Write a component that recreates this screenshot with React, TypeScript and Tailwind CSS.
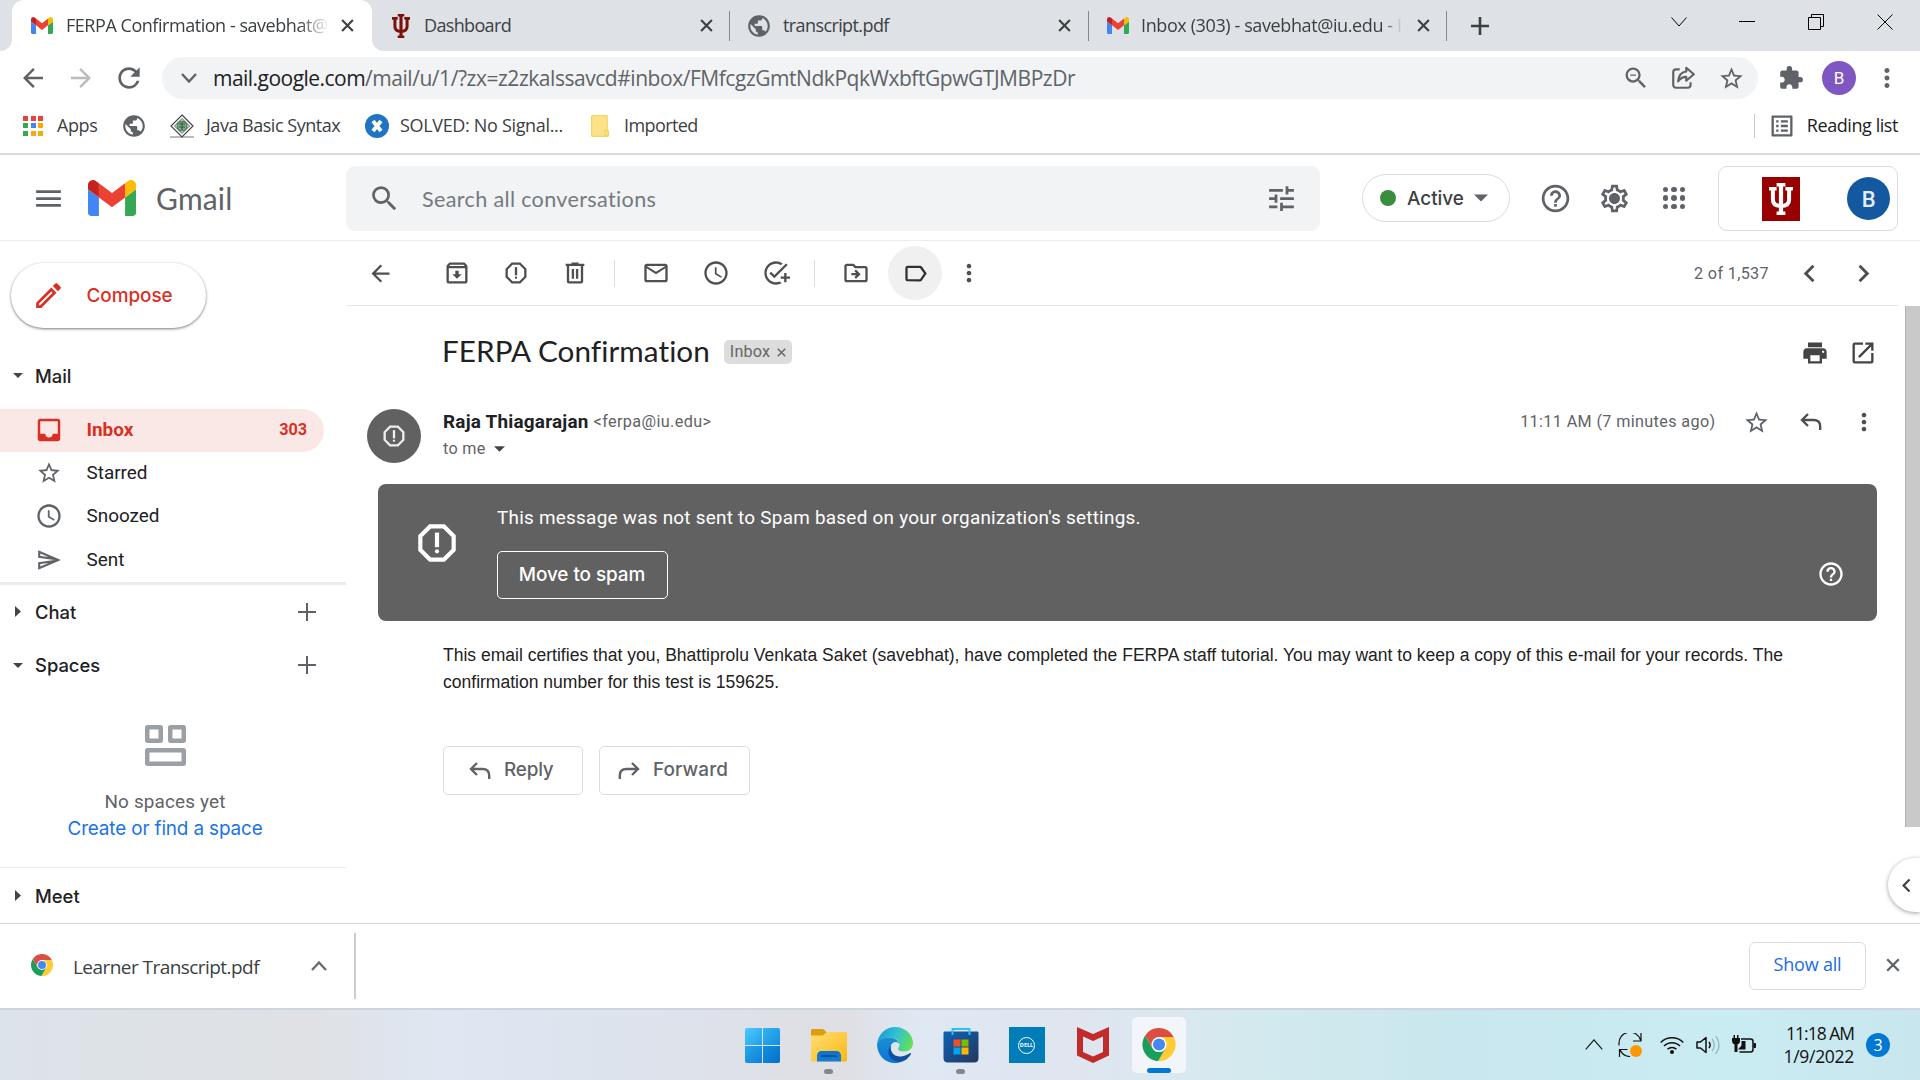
import React from "react";
import {
  MdArrowBack, MdArrowForward, MdRefresh, MdZoomOut, MdStarBorder, MdExtension, MdMoreVert, MdPublic,
  MdMenu, MdSearch, MdTune, MdHelpOutline, MdOutlineSettings, MdOutlineEdit, MdInbox, MdAccessTime,
  MdOutlineSend, MdOutlineArchive, MdOutlineReport, MdMailOutline, MdOutlineAddTask, MdOutlineDriveFileMove,
  MdLabelOutline, MdChevronLeft, MdChevronRight, MdPrint, MdOpenInNew, MdOutlineListAlt,
} from "react-icons/md";

const UI = "font-['Open_Sans',sans-serif]";
const RB = "font-['Roboto',sans-serif]";
const IN = "font-['Inter',sans-serif]";
const LT = "font-['Lato',sans-serif]";

type P = { className?: string };

/* A box whose content sits in its middle */
function Cell({ className = "", children }: P & { children?: React.ReactNode }) {
  return <span className={`flex shrink-0 items-center justify-center ${className}`}>{children}</span>;
}

function GmailLogo({ className }: P) {
  return (
    <svg viewBox="52 42 88 66" className={className} preserveAspectRatio="none">
      <path fill="#4285f4" d="M58 108h14V74L52 59v43c0 3.32 2.69 6 6 6" />
      <path fill="#34a853" d="M120 108h14c3.32 0 6-2.69 6-6V59l-20 15" />
      <path fill="#fbbc04" d="M120 48v26l20-15v-8c0-7.42-8.47-11.65-14.4-7.2" />
      <path fill="#ea4335" d="M72 74V48l24 18 24-18v26L96 92" />
      <path fill="#c5221f" d="M52 51v8l20 15V48l-5.6-4.2c-5.94-4.45-14.4-.22-14.4 7.2" />
    </svg>
  );
}

function Trident({ className }: P) {
  return (
    <svg viewBox="0 0 24 32" className={className} fill="none" stroke="currentColor">
      <path strokeWidth="4.2" d="M12 1v30" />
      <path strokeWidth="3.4" d="M7.6 1.7h8.8M7.6 30.3h8.8M0 5.8h7.6M16.4 5.8H24" />
      <path strokeWidth="4" d="M3.9 5v11.5c0 4.6 2.6 6.5 8.1 6.5s8.1-1.9 8.1-6.5V5" />
    </svg>
  );
}

function Chrome({ className }: P) {
  return (
    <svg viewBox="2 2 44 44" className={className}>
      <path fill="#fc3" d="M24 14H43.6A22 22 0 0 1 22.86 45.97L32.66 29z" />
      <path fill="#1a9f5b" d="M32.66 29L22.86 45.97A22 22 0 0 1 5.54 12.03L15.34 29z" />
      <path fill="#dc4e41" d="M15.34 29L5.54 12.03A22 22 0 0 1 43.6 14H24z" />
      <circle cx="24" cy="24" r="10" fill="#fff" />
      <circle cx="24" cy="24" r="8" fill="#4688f1" />
    </svg>
  );
}

function Close({ className }: P) {
  return (
    <svg viewBox="0 0 14 14" className={className} stroke="currentColor" strokeWidth="2.3">
      <path d="M1.2 1.2l11.6 11.6M12.8 1.2L1.2 12.8" />
    </svg>
  );
}

function Chevron({ className, d }: P & { d: string }) {
  return (
    <svg viewBox="0 0 16 10" className={className} fill="none" stroke="currentColor">
      <path d={d} />
    </svg>
  );
}

function Reply({ className }: P) {
  return (
    <svg viewBox="0 0 22 18" className={className} fill="none" stroke="currentColor" strokeWidth="2.4">
      <path d="M8 1L2 7l6 6M2 7h11.5c4.200 0 6.700 2.500 6.700 6.500V17" />
    </svg>
  );
}

function Trash({ className }: P) {
  return (
    <svg viewBox="0 0 24 24" className={className} fill="none" stroke="currentColor" strokeWidth="2">
      <path d="M4 5h16M9 4h6M6 5v14.2c0 .5.300.800.800.800h10.400c.5 0 .800-.300.800-.800V5M10.200 8.500v8.500M13.800 8.500v8.500" />
    </svg>
  );
}

function Plus({ className }: P) {
  return (
    <svg viewBox="0 0 18 18" className={className} stroke="currentColor" strokeWidth="2">
      <path d="M9 0v18M0 9h18" />
    </svg>
  );
}

function Down({ className }: P) {
  return (
    <svg viewBox="0 0 10 5" className={className} fill="currentColor">
      <path d="M0 0h10L5 5z" />
    </svg>
  );
}

function Right({ className }: P) {
  return (
    <svg viewBox="0 0 6 11" className={className} fill="currentColor">
      <path d="M0 0v11l6-5.500z" />
    </svg>
  );
}

function TabStrip() {
  return (
    <div className={`flex h-[51px] shrink-0 items-center bg-[#dee1e6] text-[18px] text-[#3c4043] ${UI}`}>
      <span className="h-full w-3 bg-white">
        <span className="block h-full w-full rounded-br-[12px] bg-[#dee1e6]" />
      </span>
      <div className="flex h-full w-[360px] items-center rounded-t-[12px] bg-white pl-[19px]">
        <GmailLogo className="h-[17px] w-[22px]" />
        <span className="ml-[13px] w-[264px] overflow-hidden whitespace-nowrap tracking-[-0.46px] [mask-image:linear-gradient(to_right,black_88%,transparent)]">
          FERPA Confirmation - savebhat@
        </span>
        <Close className="ml-[11px] size-[13px]" />
      </div>
      <span className="h-full w-3 bg-white">
        <span className="block h-full w-full rounded-bl-[12px] bg-[#dee1e6]" />
      </span>
      <Trident className="ml-[7px] h-6 w-5 text-[#7d110c]" />
      <span className="ml-[13px] w-[276px] tracking-[-0.65px]">Dashboard</span>
      <Close className="size-[13px]" />
      <span className="ml-[16px] h-[30px] w-px bg-[#85888d]" />
      <MdPublic className="ml-[16px] size-[26px] text-[#5f6368]" />
      <span className="ml-[11px] w-[275px] tracking-[-0.6px]">transcript.pdf</span>
      <Close className="size-[13px]" />
      <span className="ml-[17px] h-[30px] w-px bg-[#85888d]" />
      <GmailLogo className="ml-[18px] h-[17px] w-[22px]" />
      <span className="ml-[12px] w-[262px] overflow-hidden whitespace-nowrap tracking-[-0.39px] [mask-image:linear-gradient(to_right,black_92%,transparent)]">
        Inbox (303) - savebhat@iu.edu - I
      </span>
      <Close className="ml-[14px] size-[13px]" />
      <span className="ml-[16px] h-[30px] w-px bg-[#85888d]" />
      <svg viewBox="0 0 18 18" className="ml-[24px] size-[18px]" stroke="#3c4043" strokeWidth="2.600"><path d="M9 0v18M0 9h18" /></svg>
      <div className="mb-2 ml-auto flex items-center text-black">
        <Chevron className="h-[10px] w-4" d="M.5 .5L8 9L15.500 .5" />
        <span className="ml-[52px] h-px w-[16px] bg-black" />
        <svg viewBox="0 0 16 16" className="ml-[53px] size-4" fill="none" stroke="currentColor"><path d="M.5 3.500h12v12H.5zM3.500 3.500v-3h12v12h-3" /></svg>
        <svg viewBox="0 0 16 16" className="mr-[27px] ml-[53px] size-4" fill="none" stroke="currentColor"><path d="M.5.5l15 15M15.500.5l-15 15" /></svg>
      </div>
    </div>
  );
}

function AddressBar() {
  return (
    <div className="flex h-[54px] shrink-0 items-center bg-white text-[#5f6368]">
      <MdArrowBack className="ml-[18px] size-[30px]" />
      <MdArrowForward className="ml-[18px] size-[30px] text-[#babcbe]" />
      <MdRefresh className="ml-[17px] size-[32px]" />
      <div className={`ml-[17px] flex h-[42px] w-[1596px] items-center rounded-full bg-[#f1f3f4] ${UI}`}>
        <Chevron className="ml-[19px] h-[10px] w-4 stroke-[2.400]" d="M1 1L8 8.500L15 1" />
        <span className="ml-[16px] pt-[2px] text-[21px] whitespace-nowrap text-[#5f6368]">
          <span className="tracking-[-0.53px] text-[#202124]">mail.google.com</span>
          <span className="tracking-[-0.46px]">/mail/u/1/?zx=z2zkalssavcd#inbox/FMfcgzGmtNdkPqkWxbftGpwGTJMBPzDr</span>
        </span>
        <MdZoomOut className="ml-auto size-[28px]" />
        <svg viewBox="0 0 24 24" className="ml-[20px] size-[26px]" fill="none" stroke="currentColor" strokeWidth="2" strokeLinejoin="round">
          <path d="M9 4H5.500A2.500 2.500 0 0 0 3 6.500v12A2.500 2.500 0 0 0 5.500 21h11a2.500 2.500 0 0 0 2.500-2.500V16" />
          <path d="M15 2.500L22 8.500L15 14.500V11c-3.500 0-5.500 1.200-7.500 4c.5-5 3-8.500 7.500-9z" />
        </svg>
        <MdStarBorder className="mr-[13px] ml-[22px] size-[27px]" />
      </div>
      <MdExtension className="ml-[20px] size-[26px]" />
      <Cell className={`ml-[18px] size-[34px] rounded-full bg-[#7e57c2] pt-px text-[17px] text-white ${RB}`}>B</Cell>
      <MdMoreVert className="ml-[16px] size-[30px]" />
    </div>
  );
}

const APP_DOTS = ["bg-[#ea4335]", "bg-[#ea4335]", "bg-[#ea4335]", "bg-[#34a853]", "bg-[#4285f4]", "bg-[#f9ab00]", "bg-[#34a853]", "bg-[#f9ab00]", "bg-[#f9ab00]"];

function Bookmarks() {
  return (
    <div className={`flex h-[50px] shrink-0 items-center border-b-2 border-[#dadada] bg-white pb-[7px] text-[18px] whitespace-nowrap text-[#3c4043] ${UI}`}>
      <div className="ml-[23px] grid grid-cols-3 gap-[2.500px]">
        {APP_DOTS.map((c, i) => <span key={i} className={`size-[5px] ${c}`} />)}
      </div>
      <span className="ml-[14px] w-[64px] tracking-[-0.4px]">Apps</span>
      <MdPublic className="size-[26px] text-[#5f6368]" />
      <svg viewBox="0 0 24 24" className="ml-[23px] size-6" fill="none">
        <path d="M0 23h24" stroke="#bbb" strokeWidth="2" />
        <path d="M12 1l11 11-11 11L1 12z" fill="#fff" stroke="#444" strokeWidth="1.200" />
        <path d="M12 4.500l7.500 7.500-7.500 7.500L4.500 12z" stroke="#555" />
        <circle cx="12" cy="12" r="5" fill="#7fa98b" stroke="#2f6b42" />
        <path d="M9 10h6M9 13h6M12 8v8" stroke="#36543f" />
      </svg>
      <span className="ml-3 w-[159px] tracking-[-0.48px]">Java Basic Syntax</span>
      <svg viewBox="0 0 24 24" className="size-6">
        <circle cx="12" cy="12" r="12" fill="#1f74c4" />
        <path d="M8 7l8 10M16 7l-8 10" stroke="#fff" strokeWidth="3.800" />
      </svg>
      <span className="ml-[11px] w-[191px] tracking-[-0.33px]">SOLVED: No Signal...</span>
      <svg viewBox="0 0 18 22" className="h-[22px] w-[18px]" stroke="#f0cf4b" fill="#fde28a">
        <path d="M.7.7h15.500v15l1 1v4.600H.7z" />
        <path d="M14 21v-5.500h3.200V21z" />
      </svg>
      <span className="ml-[15px] tracking-[-0.6px]">Imported</span>
      <span className="ml-auto h-6 w-px bg-[#c6c8cb]" />
      <MdOutlineListAlt className="ml-[13px] size-[28px] text-[#5f6368]" />
      <span className="mr-[22px] ml-[11px] tracking-[-0.43px] text-[#202124]">Reading list</span>
    </div>
  );
}

function Header() {
  return (
    <div className="flex h-[86px] shrink-0 items-center border-b border-[#ececec] bg-white pt-px text-[#5f6368]">
      <MdMenu className="ml-[32px] size-[33px]" />
      <GmailLogo className="ml-[23px] h-9 w-[48px]" />
      <span className={`ml-[20px] w-[190px] text-[30px] tracking-[0.2px] ${LT}`}>Gmail</span>
      <div className="flex h-[65px] w-[974px] items-center rounded-[9px] bg-[#f1f3f4]">
        <MdSearch className="ml-[22px] size-[33px]" />
        <span className={`mt-[2px] ml-[21px] text-[21.600px] tracking-[0.33px] text-[#757a7f] ${LT}`}>Search all conversations</span>
        <MdTune className="mr-[22px] ml-auto size-[33px]" />
      </div>
      <div className="ml-[42px] flex h-[48px] w-[148px] items-center rounded-full border border-[#dadce0]">
        <span className="ml-[17px] size-4 rounded-full bg-[#388e3c]" />
        <span className={`ml-[11px] pt-[2px] text-[18.900px] font-medium text-[#3c4043] ${IN}`}>Active</span>
        <Down className="ml-[10px] h-[8px] w-[14px]" />
      </div>
      <MdHelpOutline className="ml-[29px] size-[33px]" />
      <span className="relative ml-[26px] flex size-[33px] items-center justify-center">
        <MdOutlineSettings className="size-[33px]" />
        <span className="absolute size-[8px] rounded-full bg-[#5f6368]" />
      </span>
      <div className="ml-[32px] grid grid-cols-3 gap-[3px]">
        {APP_DOTS.map((_, i) => <span key={i} className="size-[5.400px] rounded-full bg-[#5f6368]" />)}
      </div>
      <div className="ml-[33px] flex h-[65px] w-[180px] items-center rounded-[9px] border border-[#dadce0]">
        <Cell className="ml-[43px] mt-px h-[44px] w-[38px] bg-[#900]"><Trident className="h-8 w-6 text-white" /></Cell>
        <Cell className={`mt-px ml-[47px] size-[43px] rounded-full bg-[#14599f] pt-[2px] text-[22px] font-medium text-[#e4edf6] ${RB}`}>B</Cell>
      </div>
    </div>
  );
}

function NavRow({ icon, label, children, className = "" }: P & { icon: React.ReactNode; label: string; children?: React.ReactNode }) {
  return (
    <div className={`flex h-[43px] items-center rounded-r-full text-[18.900px] ${RB} ${className}`}>
      <Cell className="ml-[33px] w-[31px]">{icon}</Cell>
      <span className="ml-[22.500px]">{label}</span>
      {children}
    </div>
  );
}

function Section({ open, label, plus, className = "" }: P & { open?: boolean; label: string; plus?: boolean }) {
  return (
    <div className={`flex items-center text-[#202124] ${className}`}>
      <Cell className="ml-[12px] w-[11px] text-[#444]">{open ? <Down className="h-[5px] w-[10px]" /> : <Right className="h-[11px] w-[6px]" />}</Cell>
      <span className={`ml-[12px] pt-[2px] text-[18.400px] font-medium ${IN}`}>{label}</span>
      {plus && <Plus className="mr-[30.500px] ml-auto size-[18px] text-[#5f6368]" />}
    </div>
  );
}

function Sidebar() {
  return (
    <div className="flex w-[346px] shrink-0 flex-col bg-white text-[#202124]">
      <div className="mt-[22px] ml-[11px] flex h-[65px] w-[195px] shrink-0 items-center rounded-full bg-white text-[#d93025] shadow-[0_1px_3px_rgba(60,64,67,0.5),0_1px_2px_rgba(60,64,67,0.25)]">
        <MdOutlineEdit className="ml-[21px] size-[33px]" />
        <span className={`ml-[21.500px] pt-[2px] text-[18.900px] font-medium tracking-[-0.03px] ${IN}`}>Compose</span>
      </div>
      <Section open label="Mail" className="mt-[28px] h-10" />
      <NavRow className="mt-[13px] w-[324px] bg-[#fae8e6] font-bold text-[#d93025]" icon={<MdInbox className="size-[30px]" />} label="Inbox">
        <span className="mr-[17px] ml-auto text-[16.200px]">303</span>
      </NavRow>
      <NavRow icon={<MdStarBorder className="size-[26px] text-[#5f6368]" />} label="Starred" />
      <NavRow icon={<MdAccessTime className="size-[28px] text-[#5f6368]" />} label="Snoozed" />
      <NavRow className="mt-px" icon={<MdOutlineSend className="size-[26px] text-[#5f6368]" />} label="Sent" />
      <div className="mt-px h-[3px] shrink-0 bg-[#ececec]" />
      <Section label="Chat" plus className="h-[53px]" />
      <Section open label="Spaces" plus className="h-[54px]" />
      <div className="mt-[33px] flex w-[330px] flex-col items-center">
        <svg viewBox="0 0 41 41" className="size-[41px]" fill="none" stroke="#9aa0a6" strokeWidth="4.500">
          <rect x="2.250" y="2.250" width="13.500" height="13.500" rx=".5" />
          <rect x="25.250" y="2.250" width="13.500" height="13.500" rx=".5" />
          <rect x="2.250" y="25.250" width="36.500" height="13.500" rx=".5" />
        </svg>
        <span className={`mt-[22px] text-[18.900px] leading-[27px] tracking-[0.16px] text-[#5f6368] ${RB}`}>No spaces yet</span>
        <span className={`text-[18.900px] leading-[27px] tracking-[-0.14px] text-[#1a73e8] ${IN}`}>Create or find a space</span>
      </div>
      <div className="mt-[25px] h-px shrink-0 bg-[#ececec]" />
      <Section label="Meet" className="h-[55px]" />
    </div>
  );
}

function Toolbar() {
  return (
    <div className="mr-[22px] flex h-[65px] shrink-0 items-center border-b border-[#e8e8e8] text-[#4f4f4f]">
      <MdArrowBack className="ml-[21px] size-[27px]" />
      <MdOutlineArchive className="ml-[48.500px] size-[28px]" />
      <MdOutlineReport className="ml-[31px] size-[28px]" />
      <Trash className="ml-[31px] size-[28px]" />
      <span className="ml-[25px] h-[27px] w-px bg-[#dedede]" />
      <MdMailOutline className="ml-[27px] size-[28px]" />
      <MdAccessTime className="ml-[32px] size-[28px]" />
      <MdOutlineAddTask className="ml-[32px] size-[28px]" />
      <span className="ml-[24px] h-[27px] w-px bg-[#dedede]" />
      <MdOutlineDriveFileMove className="ml-[27px] size-[28px]" />
      <Cell className="ml-[18.500px] size-[54px] rounded-full bg-[#f0f0f0] text-[#303030]"><MdLabelOutline className="size-[27px]" /></Cell>
      <MdMoreVert className="ml-[12.500px] size-[28px]" />
      <span className={`ml-auto pt-[2px] text-[16.200px] tracking-[0.342px] text-[#5f6368] ${RB}`}>2 of 1,537</span>
      <MdChevronLeft className="ml-[23px] size-[35px]" />
      <MdChevronRight className="mr-[17px] ml-[19px] size-[35px]" />
    </div>
  );
}

function Message() {
  return (
    <div className={`flex flex-1 flex-col ${RB}`}>
      <div className="mt-[28px] flex h-[36px] items-center text-[#444]">
        <span className={`ml-[96px] pb-px text-[29.700px] tracking-[0.06px] text-[#202124] ${LT}`}>FERPA Confirmation</span>
        <div className="ml-[14px] flex h-6 items-center rounded-[5px] bg-[#ddd] pr-[6px] pl-[6px] text-[16.200px] tracking-[0.19px] text-[#666]">
          Inbox
          <Close className="ml-[7px] size-[9px]" />
        </div>
        <MdPrint className="mt-px ml-auto size-[28px]" />
        <MdOpenInNew className="mt-px mr-[28px] ml-[20px] size-[28px]" />
      </div>
      <div className="mt-[39px] flex h-[54px]">
        <Cell className="ml-[21px] size-[54px] rounded-full bg-[#616161] text-[#eee]"><MdOutlineReport className="size-[28px]" /></Cell>
        <div className="ml-[22px] flex-1 text-[16.200px] text-[#5f6368]">
          <div className="flex h-[26px] items-center">
            <span className="text-[18.900px] font-bold tracking-[0.22px] text-[#202124]">Raja Thiagarajan</span>
            <span className="ml-[5px] tracking-[0.38px]">&lt;ferpa@iu.edu&gt;</span>
            <span className="ml-auto tracking-[0.36px]">11:11 AM (7 minutes ago)</span>
            <MdStarBorder className="ml-[27px] size-[27px]" />
            <Reply className="ml-[30px] h-[18px] w-[22px] text-[#4f4f4f]" />
            <MdMoreVert className="mr-[27.500px] ml-[28px] size-[28px] text-[#4f4f4f]" />
          </div>
          <div className="flex h-[28px] items-center">
            <span className="tracking-[0.27px]">to me</span>
            <Down className="ml-[8px] h-[6px] w-[11px] text-[#444]" />
          </div>
        </div>
      </div>
      <div className="mt-[21px] ml-[32px] flex h-[137px] w-[1499px] rounded-[8px] bg-[#616161] text-white">
        <MdOutlineReport className="mt-[34px] ml-[34px] size-[50px]" />
        <div className="ml-[35px] flex flex-1 flex-col items-start">
          <span className="mt-[20px] text-[18.900px] leading-[27px] tracking-[0.257px]">This message was not sent to Spam based on your organization's settings.</span>
          <span className={`mt-[20px] flex h-[48px] w-[171px] items-center justify-center rounded-[5px] border border-white pr-px text-[18.900px] font-medium tracking-[-0.05px] ${IN}`}>Move to spam</span>
        </div>
        <MdHelpOutline className="mt-[76px] mr-[32px] size-[28px]" />
      </div>
      <p className="mt-[21px] ml-[97px] w-[1400px] font-['Liberation_Sans',sans-serif] text-[17.550px] leading-[27px] text-[#222]">
        This email certifies that you, Bhattiprolu Venkata Saket (savebhat), have completed the FERPA staff tutorial. You may want to keep a copy of this e-mail for your records. The
        <br />
        confirmation number for this test is 159625.
      </p>
      <div className={`mt-[50px] ml-[97px] flex gap-[16px] text-[18.900px] font-medium text-[#5f6368] ${IN}`}>
        <div className="flex h-[49px] w-[140px] items-center rounded-[5px] border border-[#dadce0]">
          <Reply className="ml-[25px] h-[18px] w-[22px]" />
          <span className="ml-[13px] tracking-[-0.2px]">Reply</span>
        </div>
        <div className="flex h-[49px] w-[151px] items-center rounded-[5px] border border-[#dadce0]">
          <Reply className="ml-[18px] h-[18px] w-[22px] -scale-x-100" />
          <span className="ml-[13px] tracking-[0.1px]">Forward</span>
        </div>
      </div>
    </div>
  );
}

function Downloads() {
  return (
    <div className={`flex h-[85px] shrink-0 items-center border-t border-[#d5d7da] bg-white text-[#3c4043] ${UI}`}>
      <Chrome className="mb-[2px] ml-[31px] size-[22px]" />
      <span className="ml-[20px] w-[238px] pt-[2px] text-[19px] tracking-[-0.55px]">Learner Transcript.pdf</span>
      <Chevron className="mb-px h-[10px] w-4 stroke-[2.400] text-[#6a6d72]" d="M1 9L8 1.500L15 9" />
      <span className="ml-[27px] h-[66px] w-[2px] bg-[#ccc]" />
      <Cell className="mr-[20px] mb-px ml-auto h-[48px] w-[117px] rounded-[6px] border border-[#dadce0] pb-[3px] text-[18px] font-medium tracking-[-0.2px] text-[#1a6be8]">Show all</Cell>
      <Close className="mr-[20px] mb-[2px] size-[14px] text-[#5f6368]" />
    </div>
  );
}

function Edge() {
  return (
    <svg viewBox="0 0 36 36" className="size-9">
      <defs>
        <linearGradient id="cap" x1="0" y1=".3" x2="1" y2=".6"><stop offset="0" stopColor="#1d9ad8" /><stop offset=".5" stopColor="#31c2d3" /><stop offset="1" stopColor="#66e052" /></linearGradient>
        <linearGradient id="body" x1="0" y1="0" x2="0" y2="1"><stop offset="0" stopColor="#1b8fd0" /><stop offset="1" stopColor="#0a74da" /></linearGradient>
      </defs>
      <path fill="url(#cap)" d="M0 17C1 7 9 0 18 0c11 0 18 8 18 16 0 5-4 8.500-9 8.500-4 0-6-1.500-6-2.500s1.500-2 1.500-4.500c0-3.500-4-7-9.500-7C6 10.500 1 14 0 17z" />
      <path fill="url(#body)" d="M0 17c1.500-4.500 7-6.700 13-6.500 5 .2 9 3.500 9 6.500-2-3-6-2.500-8 1-3 6 1 14 11 16.500-3 1.500-5 1.500-7 1.500C8 36 0 28 0 17z" />
      <path fill="#11509e" d="M14 18c-1.500 8 4 12 10 11.500 4-.5 7-2.500 9.500-3.500 1 0 .5 1.500-.5 2.500-3 4.500-7 6-9 6.300C13 35 8 26 14 18z" />
    </svg>
  );
}

function Slot({ children, mark }: { children: React.ReactNode; mark?: boolean }) {
  return (
    <div className="flex h-[58px] w-[66px] flex-col items-center pt-[10px]">
      <Cell className="size-[38px]">{children}</Cell>
      {mark && <span className="mt-[5px] h-[5px] w-[9px] rounded-full bg-[#84878c]" />}
    </div>
  );
}

function Taskbar() {
  return (
    <div className={`flex h-[72px] shrink-0 items-center border-t-2 border-[#cdd6df] bg-[linear-gradient(90deg,#dce3e9_0%,#dfe1e4_16%,#dfe7f2_23%,#dde3ed_32%,#dfdfe4_44%,#dfe8f3_48%,#e0e5ef_56%,#d8e9ef_62%,#d2e9ee_66%,#c9e7ee_76%,#c9ecf2_90%,#c9e6ee_100%)] ${UI}`}>
      <div className="ml-[729.500px] flex items-center">
        <Slot>
          <div className="grid grid-cols-2 gap-px">
            <span className="size-[17px] rounded-tl-[2px] bg-linear-to-br from-[#4dcaff] to-[#1f9fe8]" />
            <span className="size-[17px] rounded-tr-[2px] bg-linear-to-br from-[#33b4f2] to-[#0f8fdf]" />
            <span className="size-[17px] rounded-bl-[2px] bg-linear-to-br from-[#2aa7ec] to-[#0a80d6]" />
            <span className="size-[17px] rounded-br-[2px] bg-linear-to-br from-[#1490e0] to-[#0570c8]" />
          </div>
        </Slot>
        <Slot mark>
          <svg viewBox="0 0 36 36" className="size-9">
            <defs>
              <linearGradient id="fold" x1="0" y1="0" x2="1" y2="1"><stop offset="0" stopColor="#ffde75" /><stop offset="1" stopColor="#fcb813" /></linearGradient>
              <linearGradient id="tray" x1="0" y1="0" x2="0" y2="1"><stop offset="0" stopColor="#0a72c8" /><stop offset="1" stopColor="#1580d8" /></linearGradient>
            </defs>
            <path fill="#dd9d0c" d="M0 3.500C0 2.500.5 2 1.500 2H12l4 3.500V10H0z" />
            <path fill="url(#fold)" d="M0 8.500h11.500L16 5h18.500c1 0 1.500.500 1.500 1.500V33c0 1-.5 1.500-1.500 1.500h-33C.5 34.500 0 34 0 33z" />
            <path fill="url(#tray)" d="M6 34.500V29c0-2.800 1.700-5 4.500-5h15c2.800 0 4.500 2.200 4.500 5v5.500z" />
            <path stroke="#0c4f96" strokeWidth="1.800" strokeLinecap="round" d="M11 29h14" />
          </svg>
        </Slot>
        <Slot><Edge /></Slot>
        <Slot mark>
          <svg viewBox="0 0 36 36" className="size-9">
            <defs><linearGradient id="bag" x1="0" y1="0" x2="1" y2="1"><stop offset="0" stopColor="#0d63b5" /><stop offset="1" stopColor="#25365f" /></linearGradient></defs>
            <path fill="url(#bag)" d="M.5 6c0-1 .5-1.500 1.500-1.500h32c1 0 1.500.5 1.500 1.500v25c0 3-1.500 4.500-4.500 4.500H5C2 35.500.5 34 .5 31z" />
            <path fill="none" stroke="#2bc1f2" strokeWidth="1.900" d="M9.500 8V2h17v6" />
            <path fill="#f25022" d="M10.500 12.500h7v7h-7z" /><path fill="#7fba00" d="M18.500 12.500h7v7h-7z" />
            <path fill="#00a4ef" d="M10.500 20.500h7v7h-7z" /><path fill="#ffb900" d="M18.500 20.500h7v7h-7z" />
          </svg>
        </Slot>
        <Slot>
          <Cell className="size-9 bg-[#007db8]">
            <Cell className="size-[17px] rounded-full border border-white text-[5.500px] font-bold text-white">DELL</Cell>
          </Cell>
        </Slot>
        <Slot>
          <svg viewBox="0 0 32 36" className="h-9 w-8"><path fill="#c22b2c" fillRule="evenodd" d="M0 0l16 7L32 0v28.500L16 36 0 28.500zM6 9.500v15.500l10 4.500 10-4.500V9.500l-10 4.500z" /></svg>
        </Slot>
        <div className="ml-[5px] flex h-[58px] w-[56px] flex-col items-center rounded-[6px] border border-[#dfe6ee] bg-[#f2f6fa] pt-[11px]">
          <Chrome className="size-[34px]" />
          <span className="mt-[7px] h-[5px] w-6 rounded-full bg-[#0078d4]" />
        </div>
      </div>
      <div className="ml-auto flex items-center pb-px text-[#111]">
        <Chevron className="h-[11px] w-[18px]" d="M.5 9.500L8 .8L15.500 9.500" />
        <svg viewBox="0 0 24 24" className="ml-[15px] size-6" fill="none" stroke="currentColor" strokeWidth="1.200">
          <path d="M1 12.500V11A11 11 0 0 1 22.500 7M23 0v8h-8M12 23.500A11 11 0 0 1 2 16.500M1.500 24v-7.500h8" />
          <circle cx="18" cy="18" r="6" fill="#ff9800" stroke="none" />
        </svg>
        <svg viewBox="0 0 24 18" className="ml-[18px] h-[18px] w-6" fill="none" stroke="currentColor" strokeWidth="1.500">
          <path d="M.7 6.500a16 16 0 0 1 22.600 0M4 10a11.300 11.300 0 0 1 16 0M7.500 13.300a6.400 6.400 0 0 1 9 0" />
          <circle cx="12" cy="16" r="2" fill="currentColor" stroke="none" />
        </svg>
        <svg viewBox="0 0 24 20" className="ml-3 h-5 w-6" fill="none" stroke="currentColor" strokeWidth="1.500">
          <path d="M1 7v6h3.500l5.500 4.500v-15L4.500 7z" strokeLinejoin="round" />
          <path d="M13 7a5 5 0 0 1 0 6" />
          <path d="M16 4a9 9 0 0 1 0 12M19.500 1.200a13 13 0 0 1 0 17.600" stroke="#8fb0b8" strokeWidth="1.200" />
        </svg>
        <svg viewBox="0 0 24 20" className="ml-[12px] h-5 w-6" fill="none" stroke="currentColor" strokeWidth="1.500">
          <path d="M9 4h9.500C20 4 21 5 21 6.500v8c0 1.500-1 2.500-2.500 2.500H7.500" />
          <path fill="currentColor" stroke="none" d="M21.500 8H23c.6 0 1 .4 1 1v3c0 .6-.4 1-1 1h-1.500zM13.500 6H9.500v4.500L6 14.500h7.500z" />
          <path fill="currentColor" stroke="none" d="M1.500 0H3v3h2V0h1.500v3H8v3c0 2-1.200 3-2.500 3.300V17h-3V9.300C1.200 9 0 8 0 6V3h1.500z" />
        </svg>
        <div className="ml-[26px] flex w-[72px] flex-col items-end text-[17.500px] leading-[23px] whitespace-nowrap">
          <span className="tracking-[-1px]">11:18 AM</span>
          <span className="tracking-[-0.3px]">1/9/2022</span>
        </div>
        <Cell className="mr-[30px] ml-[12px] size-6 rounded-full bg-[#0078d4] text-[16px] text-white">3</Cell>
      </div>
    </div>
  );
}

export default function App() {
  return (
    <div className="flex h-[1080px] w-[1920px] flex-col overflow-hidden bg-white">
      <TabStrip />
      <AddressBar />
      <Bookmarks />
      <Header />
      <div className="flex h-[682px] shrink-0">
        <Sidebar />
        <div className="relative flex min-w-0 flex-1 flex-col">
          <Toolbar />
          <div className="flex flex-1">
            <Message />
            <div className="h-[521px] w-[15px] shrink-0 border-l border-[#b0b0b0] bg-[#c9c9c9]" />
          </div>
          <div className="absolute right-0 bottom-[11px] flex h-[54px] w-8 items-center overflow-visible rounded-l-full bg-white pl-[5px] text-[#444] shadow-[0_1px_4px_rgba(60,64,67,0.5)]">
            <MdChevronLeft className="size-[27px]" />
          </div>
        </div>
      </div>
      <Downloads />
      <Taskbar />
    </div>
  );
}
